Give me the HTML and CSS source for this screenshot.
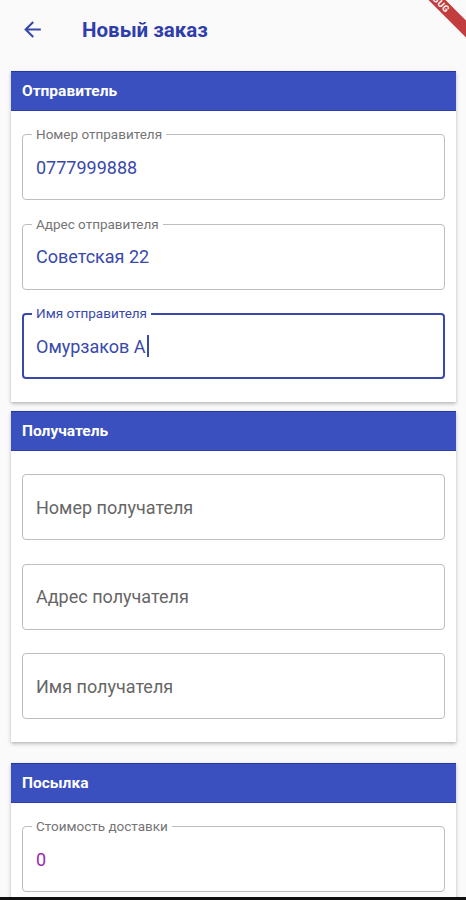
FILE: index.html
```html
<!DOCTYPE html>
<html lang="ru">
<head>
<meta charset="utf-8">
<title>Новый заказ</title>
<link rel="stylesheet" href="styles.css">
</head>
<body>
<div class="screen">
  <header class="appbar">
    <svg class="back" width="24" height="24" viewBox="0 0 24 24"><path d="M20 11H7.83l5.59-5.59L12 4l-8 8 8 8 1.41-1.41L7.83 13H20v-2z" fill="currentColor"/></svg>
    <h1 class="title">Новый заказ</h1>
  </header>

  <section class="card card-first">
    <div class="card-head">Отправитель</div>
    <div class="card-body">
      <div class="field"><span class="label">Номер отправителя</span><span class="value">0777999888</span></div>
      <div class="field"><span class="label">Адрес отправителя</span><span class="value">Советская 22</span></div>
      <div class="field focused"><span class="label">Имя отправителя</span><span class="value">Омурзаков А<span class="caret"></span></span></div>
    </div>
  </section>

  <section class="card card-second">
    <div class="card-head">Получатель</div>
    <div class="card-body">
      <div class="field"><span class="hint">Номер получателя</span></div>
      <div class="field"><span class="hint">Адрес получателя</span></div>
      <div class="field"><span class="hint">Имя получателя</span></div>
    </div>
  </section>

  <section class="card card-third">
    <div class="card-head">Посылка</div>
    <div class="card-body">
      <div class="field"><span class="label">Стоимость доставки</span><span class="value purple">0</span></div>
    </div>
  </section>

  <div class="debug-banner">DEBUG</div>
  <div class="bottom-strip"></div>
</div>
</body>
</html>
```

FILE: styles.css
```css
html, body {
  margin: 0;
  padding: 0;
}
body {
  background: #fafafa;
  font-family: Roboto, "Noto Sans", sans-serif;
  width: 466px;
  height: 900px;
  overflow: hidden;
}
.screen {
  position: relative;
  width: 466px;
  height: 900px;
  overflow: hidden;
  background: #fafafa;
}
.appbar {
  height: 59px;
  display: flex;
  align-items: center;
  padding-left: 20px;
}
.back {
  color: #3949ab;
  width: 25px;
  height: 25px;
}
.title {
  margin: 0 0 0 37px;
  font-size: 20.5px;
  font-weight: 700;
  color: #2f3eaa;
}
.card {
  margin: 0 10px 0 11px;
  background: #fff;
  box-shadow: 0 2px 4px rgba(0,0,0,0.22), 0 1px 2px rgba(0,0,0,0.08);
}
.card-first { margin-top: 12px; }
.card-second { margin-top: 9px; }
.card-third { margin-top: 21px; }
.card-head {
  height: 38px;
  background: #3a50be;
  border-top: 1px solid #2437a8;
  border-bottom: 1px solid #2d40ad;
  color: #fff;
  font-weight: 700;
  font-size: 15.5px;
  display: flex;
  align-items: center;
  padding-left: 11px;
}
.card-body {
  padding: 23px 11px 23px 11px;
  display: flex;
  flex-direction: column;
  gap: 23.5px;
}
.field {
  position: relative;
  height: 64px;
  border: 1px solid #bdbdbd;
  border-radius: 4px;
  display: flex;
  align-items: center;
  padding-left: 13px;
}
.field.focused {
  border: 2px solid #3949ab;
  height: 62px;
  padding-left: 12px;
}
.label {
  position: absolute;
  top: -9px;
  left: 9px;
  padding: 0 4px;
  background: #fff;
  font-size: 13.5px;
  line-height: 16px;
  color: #757575;
}
.focused .label {
  left: 8px;
  top: -10px;
  color: #3949ab;
}
.value {
  font-size: 18px;
  color: #3949ab;
  display: flex;
  align-items: center;
}
.value.purple { color: #9c27b0; }
.hint {
  font-size: 18px;
  color: #666;
}
.caret {
  display: inline-block;
  width: 2px;
  height: 22px;
  background: #3949ab;
  margin-left: 1px;
}
.debug-banner {
  position: absolute;
  left: 377px;
  top: -6px;
  width: 120px;
  height: 12px;
  line-height: 12px;
  transform: rotate(45deg);
  background: rgba(183, 28, 28, 0.85);
  color: #fff;
  font-size: 9px;
  font-weight: 700;
  text-align: center;
  letter-spacing: 0.5px;
}
.bottom-strip {
  position: absolute;
  left: 0;
  bottom: 0;
  width: 466px;
  height: 3px;
  background: #111;
}
```
